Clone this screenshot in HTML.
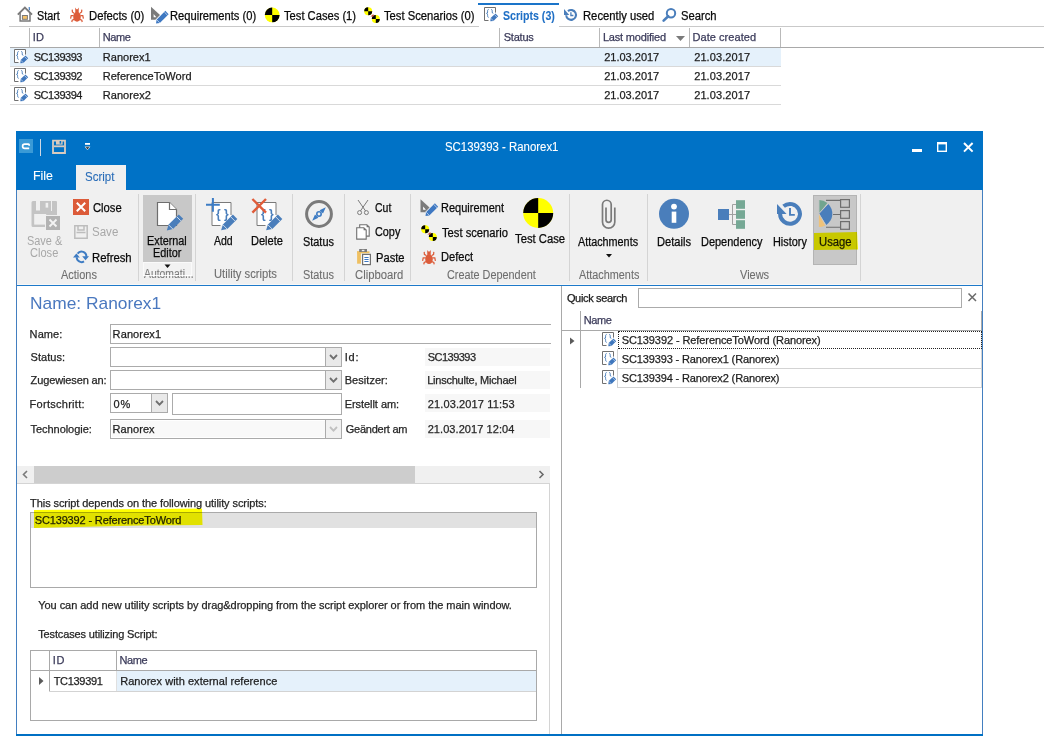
<!DOCTYPE html>
<html><head><meta charset="utf-8"><title>Ranorex Script</title>
<style>
html,body{margin:0;padding:0;}
body{width:1044px;height:736px;position:relative;overflow:hidden;background:#ffffff;font-family:"Liberation Sans",sans-serif;}
.t{position:absolute;white-space:pre;line-height:20px;height:20px;}
.r{position:absolute;}
svg.ov{position:absolute;left:0;top:0;}
</style></head><body>
<div class="t" style="left:36.60px;top:5.64px;font-size:12px;color:#0a0a0a;-webkit-text-stroke:0.25px #0a0a0a;transform:scaleX(0.9);transform-origin:0 0;">Start</div>
<div class="t" style="left:88.56px;top:5.64px;font-size:12px;color:#0a0a0a;-webkit-text-stroke:0.25px #0a0a0a;transform:scaleX(0.9404);transform-origin:0 0;">Defects (0)</div>
<div class="t" style="left:170.47px;top:5.64px;font-size:12px;color:#0a0a0a;-webkit-text-stroke:0.25px #0a0a0a;transform:scaleX(0.9297);transform-origin:0 0;">Requirements (0)</div>
<div class="t" style="left:284.30px;top:5.64px;font-size:12px;color:#0a0a0a;-webkit-text-stroke:0.25px #0a0a0a;transform:scaleX(0.9312);transform-origin:0 0;">Test Cases (1)</div>
<div class="t" style="left:384.30px;top:5.64px;font-size:12px;color:#0a0a0a;-webkit-text-stroke:0.25px #0a0a0a;transform:scaleX(0.9365);transform-origin:0 0;">Test Scenarios (0)</div>
<div class="t" style="left:583.31px;top:5.64px;font-size:12px;color:#0a0a0a;-webkit-text-stroke:0.25px #0a0a0a;transform:scaleX(0.9373);transform-origin:0 0;">Recently used</div>
<div class="t" style="left:681.26px;top:5.64px;font-size:12px;color:#0a0a0a;-webkit-text-stroke:0.25px #0a0a0a;transform:scaleX(0.9351);transform-origin:0 0;">Search</div>
<div class="t" style="left:502.90px;top:5.64px;font-size:12px;color:#1f6fc5;font-weight:bold;-webkit-text-stroke:0.1px #1f6fc5;transform:scaleX(0.8828);transform-origin:0 0;">Scripts (3)</div>
<div class="r" style="left:9px;top:26px;width:470px;height:1px;background:#c9c9c9;"></div>
<div class="r" style="left:559px;top:26px;width:485px;height:1px;background:#c9c9c9;"></div>
<div class="r" style="left:478px;top:3px;width:81px;height:2px;background:#1a74c9;"></div>
<div class="r" style="left:10px;top:47px;width:1034px;height:1px;background:#a9a9a9;"></div>
<div class="r" style="left:29px;top:28px;width:1px;height:19px;background:#b9b9b9;"></div>
<div class="r" style="left:99px;top:28px;width:1px;height:19px;background:#b9b9b9;"></div>
<div class="r" style="left:499px;top:28px;width:1px;height:19px;background:#b9b9b9;"></div>
<div class="r" style="left:599px;top:28px;width:1px;height:19px;background:#b9b9b9;"></div>
<div class="r" style="left:689px;top:28px;width:1px;height:19px;background:#b9b9b9;"></div>
<div class="r" style="left:780px;top:28px;width:1px;height:19px;background:#b9b9b9;"></div>
<div class="t" style="left:32.70px;top:27.19px;font-size:11px;color:#3b3b5a;letter-spacing:0.2px;-webkit-text-stroke:0.25px #3b3b5a;">ID</div>
<div class="t" style="left:102.70px;top:27.19px;font-size:11px;color:#3b3b5a;letter-spacing:-0.4px;-webkit-text-stroke:0.25px #3b3b5a;">Name</div>
<div class="t" style="left:503.70px;top:27.19px;font-size:11px;color:#3b3b5a;letter-spacing:-0.2px;-webkit-text-stroke:0.25px #3b3b5a;">Status</div>
<div class="t" style="left:602.90px;top:27.19px;font-size:11px;color:#3b3b5a;letter-spacing:-0.183px;-webkit-text-stroke:0.25px #3b3b5a;">Last modified</div>
<div class="t" style="left:692.50px;top:27.19px;font-size:11px;color:#3b3b5a;letter-spacing:0.055px;-webkit-text-stroke:0.25px #3b3b5a;">Date created</div>
<div class="r" style="left:10px;top:48px;width:771px;height:18px;background:#e5f1fb;"></div>
<div class="r" style="left:10px;top:66px;width:771px;height:1px;background:#d9d9d9;"></div>
<div class="r" style="left:10px;top:85px;width:771px;height:1px;background:#d9d9d9;"></div>
<div class="r" style="left:10px;top:104px;width:771px;height:1px;background:#d9d9d9;"></div>
<div class="t" style="left:33.70px;top:47.39px;font-size:11px;color:#1e1e1e;letter-spacing:-0.457px;-webkit-text-stroke:0.25px #1e1e1e;">SC139393</div>
<div class="t" style="left:102.85px;top:47.39px;font-size:11px;color:#1e1e1e;-webkit-text-stroke:0.25px #1e1e1e;">Ranorex1</div>
<div class="t" style="left:604.20px;top:47.39px;font-size:11px;color:#1e1e1e;-webkit-text-stroke:0.25px #1e1e1e;">21.03.2017</div>
<div class="t" style="left:694.20px;top:47.39px;font-size:11px;color:#1e1e1e;letter-spacing:0.088px;-webkit-text-stroke:0.25px #1e1e1e;">21.03.2017</div>
<div class="t" style="left:33.70px;top:66.39px;font-size:11px;color:#1e1e1e;letter-spacing:-0.457px;-webkit-text-stroke:0.25px #1e1e1e;">SC139392</div>
<div class="t" style="left:102.70px;top:66.39px;font-size:11px;color:#1e1e1e;letter-spacing:0.028px;-webkit-text-stroke:0.25px #1e1e1e;">ReferenceToWord</div>
<div class="t" style="left:604.20px;top:66.39px;font-size:11px;color:#1e1e1e;-webkit-text-stroke:0.25px #1e1e1e;">21.03.2017</div>
<div class="t" style="left:694.20px;top:66.39px;font-size:11px;color:#1e1e1e;letter-spacing:0.088px;-webkit-text-stroke:0.25px #1e1e1e;">21.03.2017</div>
<div class="t" style="left:33.70px;top:85.39px;font-size:11px;color:#1e1e1e;letter-spacing:-0.457px;-webkit-text-stroke:0.25px #1e1e1e;">SC139394</div>
<div class="t" style="left:102.70px;top:85.39px;font-size:11px;color:#1e1e1e;letter-spacing:0.085px;-webkit-text-stroke:0.25px #1e1e1e;">Ranorex2</div>
<div class="t" style="left:604.20px;top:85.39px;font-size:11px;color:#1e1e1e;-webkit-text-stroke:0.25px #1e1e1e;">21.03.2017</div>
<div class="t" style="left:694.20px;top:85.39px;font-size:11px;color:#1e1e1e;letter-spacing:0.088px;-webkit-text-stroke:0.25px #1e1e1e;">21.03.2017</div>
<div class="r" style="left:16px;top:131px;width:967px;height:605px;background:#ffffff;box-sizing:border-box;border:1px solid #437fc0;"></div>
<div class="r" style="left:16px;top:131px;width:967px;height:59px;background:#0072c6;"></div>
<div class="r" style="left:17px;top:190px;width:965px;height:94px;background:#f0f0f0;"></div>
<div class="r" style="left:17px;top:284px;width:965px;height:1px;background:#f8f8f8;"></div>
<div class="r" style="left:17px;top:285px;width:965px;height:1px;background:#1d79c9;"></div>
<div class="r" style="left:16px;top:734px;width:967px;height:2px;background:#0070c4;"></div>
<div class="r" style="left:19px;top:139px;width:14px;height:14px;background:#3a9ad6;"></div>
<div class="r" style="left:40px;top:139px;width:1px;height:17px;background:#cfd8e4;"></div>
<div class="t" style="left:445.40px;top:137.14px;font-size:12px;color:#ffffff;-webkit-text-stroke:0.1px #ffffff;transform:scaleX(0.95);transform-origin:0 0;">SC139393 - Ranorex1</div>
<div class="r" style="left:912px;top:149px;width:10px;height:3px;background:#ffffff;"></div>
<div class="t" style="left:33.37px;top:165.64px;font-size:12px;color:#ffffff;-webkit-text-stroke:0.1px #ffffff;transform:scaleX(1.0333);transform-origin:0 0;">File</div>
<div class="r" style="left:76px;top:165px;width:50px;height:25px;background:#f0f0f0;"></div>
<div class="t" style="left:85.34px;top:166.64px;font-size:12px;color:#2a6db8;-webkit-text-stroke:0.1px #2a6db8;transform:scaleX(0.9567);transform-origin:0 0;">Script</div>
<div class="r" style="left:138px;top:194px;width:1px;height:87px;background:#d4d4d4;"></div>
<div class="r" style="left:195px;top:194px;width:1px;height:87px;background:#d4d4d4;"></div>
<div class="r" style="left:292px;top:194px;width:1px;height:87px;background:#d4d4d4;"></div>
<div class="r" style="left:344px;top:194px;width:1px;height:87px;background:#d4d4d4;"></div>
<div class="r" style="left:410px;top:194px;width:1px;height:87px;background:#d4d4d4;"></div>
<div class="r" style="left:569px;top:194px;width:1px;height:87px;background:#d4d4d4;"></div>
<div class="r" style="left:647px;top:194px;width:1px;height:87px;background:#d4d4d4;"></div>
<div class="r" style="left:860px;top:194px;width:1px;height:87px;background:#d4d4d4;"></div>
<div class="t" style="left:27.19px;top:230.54px;font-size:12px;color:#a8a8a8;transform:scaleX(0.9105);transform-origin:0 0;">Save &amp;</div>
<div class="t" style="left:30.30px;top:243.44px;font-size:12px;color:#a8a8a8;transform:scaleX(0.9233);transform-origin:0 0;">Close</div>
<div class="r" style="left:73px;top:199px;width:16px;height:16px;background:#dc5b39;"></div>
<div class="t" style="left:93.00px;top:197.74px;font-size:12px;color:#0a0a0a;-webkit-text-stroke:0.25px #0a0a0a;transform:scaleX(0.9355);transform-origin:0 0;">Close</div>
<div class="t" style="left:92.04px;top:222.24px;font-size:12px;color:#a8a8a8;transform:scaleX(0.9615);transform-origin:0 0;">Save</div>
<div class="t" style="left:92.06px;top:247.94px;font-size:12px;color:#0a0a0a;-webkit-text-stroke:0.25px #0a0a0a;transform:scaleX(0.9439);transform-origin:0 0;">Refresh</div>
<div class="t" style="left:61.40px;top:265.14px;font-size:12px;color:#6e6e6e;-webkit-text-stroke:0.1px #6e6e6e;transform:scaleX(0.9128);transform-origin:0 0;">Actions</div>
<div class="r" style="left:143px;top:195px;width:49px;height:67px;background:#c8c8c8;"></div>
<div class="r" style="left:143px;top:262px;width:49px;height:14px;background:#f2f2f2;box-sizing:border-box;border:1px solid #fafafa;"></div>
<div class="t" style="left:146.60px;top:230.64px;font-size:12px;color:#0a0a0a;-webkit-text-stroke:0.25px #0a0a0a;transform:scaleX(0.9023);transform-origin:0 0;">External</div>
<div class="t" style="left:152.69px;top:243.14px;font-size:12px;color:#0a0a0a;-webkit-text-stroke:0.25px #0a0a0a;transform:scaleX(0.9065);transform-origin:0 0;">Editor</div>
<div class="t" style="left:143.50px;top:264.14px;font-size:12px;color:#7c7c7c;-webkit-text-stroke:0.1px #7c7c7c;transform:scaleX(0.8649);transform-origin:0 0;">Automati...</div>
<div class="t" style="left:214.00px;top:230.64px;font-size:12px;color:#0a0a0a;-webkit-text-stroke:0.25px #0a0a0a;transform:scaleX(0.8762);transform-origin:0 0;">Add</div>
<div class="t" style="left:250.78px;top:230.64px;font-size:12px;color:#0a0a0a;-webkit-text-stroke:0.25px #0a0a0a;transform:scaleX(0.9206);transform-origin:0 0;">Delete</div>
<div class="t" style="left:213.57px;top:264.24px;font-size:12px;color:#6e6e6e;-webkit-text-stroke:0.1px #6e6e6e;transform:scaleX(0.9348);transform-origin:0 0;">Utility scripts</div>
<div class="t" style="left:302.59px;top:232.04px;font-size:12px;color:#0a0a0a;-webkit-text-stroke:0.25px #0a0a0a;transform:scaleX(0.9091);transform-origin:0 0;">Status</div>
<div class="t" style="left:303.39px;top:264.54px;font-size:12px;color:#6e6e6e;-webkit-text-stroke:0.1px #6e6e6e;transform:scaleX(0.9091);transform-origin:0 0;">Status</div>
<div class="t" style="left:375.40px;top:197.74px;font-size:12px;color:#0a0a0a;-webkit-text-stroke:0.25px #0a0a0a;transform:scaleX(0.8737);transform-origin:0 0;">Cut</div>
<div class="t" style="left:375.40px;top:222.24px;font-size:12px;color:#0a0a0a;-webkit-text-stroke:0.25px #0a0a0a;transform:scaleX(0.9036);transform-origin:0 0;">Copy</div>
<div class="t" style="left:376.07px;top:247.84px;font-size:12px;color:#0a0a0a;-webkit-text-stroke:0.25px #0a0a0a;transform:scaleX(0.93);transform-origin:0 0;">Paste</div>
<div class="t" style="left:355.00px;top:264.54px;font-size:12px;color:#6e6e6e;-webkit-text-stroke:0.1px #6e6e6e;transform:scaleX(0.9392);transform-origin:0 0;">Clipboard</div>
<div class="t" style="left:440.88px;top:197.74px;font-size:12px;color:#0a0a0a;-webkit-text-stroke:0.25px #0a0a0a;transform:scaleX(0.9162);transform-origin:0 0;">Requirement</div>
<div class="t" style="left:441.80px;top:222.64px;font-size:12px;color:#0a0a0a;-webkit-text-stroke:0.25px #0a0a0a;transform:scaleX(0.9324);transform-origin:0 0;">Test scenario</div>
<div class="t" style="left:441.38px;top:247.34px;font-size:12px;color:#0a0a0a;-webkit-text-stroke:0.25px #0a0a0a;transform:scaleX(0.9235);transform-origin:0 0;">Defect</div>
<div class="t" style="left:515.00px;top:229.14px;font-size:12px;color:#0a0a0a;-webkit-text-stroke:0.25px #0a0a0a;transform:scaleX(0.9377);transform-origin:0 0;">Test Case</div>
<div class="t" style="left:446.85px;top:265.14px;font-size:12px;color:#6e6e6e;-webkit-text-stroke:0.1px #6e6e6e;transform:scaleX(0.9051);transform-origin:0 0;">Create Dependent</div>
<div class="t" style="left:578.00px;top:232.04px;font-size:12px;color:#0a0a0a;-webkit-text-stroke:0.25px #0a0a0a;transform:scaleX(0.9);transform-origin:0 0;">Attachments</div>
<div class="t" style="left:578.80px;top:264.54px;font-size:12px;color:#6e6e6e;-webkit-text-stroke:0.1px #6e6e6e;transform:scaleX(0.9045);transform-origin:0 0;">Attachments</div>
<div class="t" style="left:656.97px;top:232.04px;font-size:12px;color:#0a0a0a;-webkit-text-stroke:0.25px #0a0a0a;transform:scaleX(0.9278);transform-origin:0 0;">Details</div>
<div class="t" style="left:701.09px;top:232.04px;font-size:12px;color:#0a0a0a;-webkit-text-stroke:0.25px #0a0a0a;transform:scaleX(0.9134);transform-origin:0 0;">Dependency</div>
<div class="t" style="left:773.49px;top:232.04px;font-size:12px;color:#0a0a0a;-webkit-text-stroke:0.25px #0a0a0a;transform:scaleX(0.9081);transform-origin:0 0;">History</div>
<div class="r" style="left:813px;top:195px;width:44px;height:70px;background:#c8c8c8;box-sizing:border-box;border:1px solid #b4b4b4;"></div>
<div class="t" style="left:819.11px;top:231.84px;font-size:12px;color:#1a1a1a;-webkit-text-stroke:0.25px #1a1a1a;transform:scaleX(0.9382);transform-origin:0 0;">Usage</div>
<div class="t" style="left:740.00px;top:264.54px;font-size:12px;color:#6e6e6e;-webkit-text-stroke:0.1px #6e6e6e;transform:scaleX(0.9156);transform-origin:0 0;">Views</div>
<div class="r" style="left:561px;top:286px;width:1px;height:448px;background:#a9a9a9;"></div>
<div class="t" style="left:30.00px;top:293.85px;font-size:16.6px;color:#4a78bf;transform:scaleX(1.046);transform-origin:0 0;">Name: Ranorex1</div>
<div class="t" style="left:29.60px;top:324.29px;font-size:11px;color:#262626;letter-spacing:0.1px;-webkit-text-stroke:0.25px #262626;">Name:</div>
<div class="t" style="left:30.60px;top:347.09px;font-size:11px;color:#262626;letter-spacing:0.034px;-webkit-text-stroke:0.25px #262626;">Status:</div>
<div class="t" style="left:30.60px;top:369.79px;font-size:11px;color:#262626;letter-spacing:-0.123px;-webkit-text-stroke:0.25px #262626;">Zugewiesen an:</div>
<div class="t" style="left:29.60px;top:393.59px;font-size:11px;color:#262626;letter-spacing:0.273px;-webkit-text-stroke:0.25px #262626;">Fortschritt:</div>
<div class="t" style="left:30.60px;top:419.09px;font-size:11px;color:#262626;letter-spacing:-0.055px;-webkit-text-stroke:0.25px #262626;">Technologie:</div>
<div class="r" style="left:110px;top:324px;width:441px;height:1px;background:#ababab;"></div>
<div class="r" style="left:110px;top:343px;width:441px;height:1px;background:#ababab;"></div>
<div class="r" style="left:110px;top:324px;width:1px;height:20px;background:#ababab;"></div>
<div class="t" style="left:112.60px;top:324.29px;font-size:11px;color:#1e1e1e;letter-spacing:0.115px;-webkit-text-stroke:0.25px #1e1e1e;">Ranorex1</div>
<div class="r" style="left:110px;top:347px;width:232px;height:20px;background:#ffffff;box-sizing:border-box;border:1px solid #ababab;"></div>
<div class="r" style="left:325px;top:348px;width:16px;height:18px;background:#e9e9e9;"></div>
<div class="r" style="left:325px;top:347px;width:1px;height:20px;background:#ababab;"></div>
<div class="r" style="left:110px;top:370px;width:232px;height:20px;background:#ffffff;box-sizing:border-box;border:1px solid #ababab;"></div>
<div class="r" style="left:325px;top:371px;width:16px;height:18px;background:#e9e9e9;"></div>
<div class="r" style="left:325px;top:370px;width:1px;height:20px;background:#ababab;"></div>
<div class="r" style="left:110px;top:393px;width:58px;height:20px;background:#ffffff;box-sizing:border-box;border:1px solid #ababab;"></div>
<div class="r" style="left:151px;top:394px;width:16px;height:18px;background:#e9e9e9;"></div>
<div class="r" style="left:151px;top:393px;width:1px;height:20px;background:#ababab;"></div>
<div class="t" style="left:113.60px;top:393.59px;font-size:11px;color:#1e1e1e;letter-spacing:0.8px;-webkit-text-stroke:0.25px #1e1e1e;">0%</div>
<div class="r" style="left:172px;top:393px;width:170px;height:22px;background:#fff;box-sizing:border-box;border:1px solid #ababab;"></div>
<div class="r" style="left:110px;top:419px;width:232px;height:20px;background:#ffffff;box-sizing:border-box;border:1px solid #ababab;"></div>
<div class="r" style="left:112px;top:421px;width:228px;height:16px;background:#f9f9f9;"></div>
<div class="r" style="left:325px;top:420px;width:16px;height:18px;background:#f1f1f1;"></div>
<div class="r" style="left:325px;top:419px;width:1px;height:20px;background:#ababab;"></div>
<div class="t" style="left:112.60px;top:419.09px;font-size:11px;color:#1e1e1e;letter-spacing:0.067px;-webkit-text-stroke:0.25px #1e1e1e;">Ranorex</div>
<div class="t" style="left:344.70px;top:346.89px;font-size:11px;color:#262626;letter-spacing:0.8px;-webkit-text-stroke:0.25px #262626;">Id:</div>
<div class="t" style="left:344.70px;top:369.89px;font-size:11px;color:#262626;letter-spacing:0.05px;-webkit-text-stroke:0.25px #262626;">Besitzer:</div>
<div class="t" style="left:344.70px;top:393.99px;font-size:11px;color:#262626;letter-spacing:-0.054px;-webkit-text-stroke:0.25px #262626;">Erstellt am:</div>
<div class="t" style="left:345.70px;top:418.89px;font-size:11px;color:#262626;letter-spacing:-0.24px;-webkit-text-stroke:0.25px #262626;">Geändert am</div>
<div class="r" style="left:425px;top:348px;width:125px;height:18px;background:#f7f7f7;"></div>
<div class="r" style="left:425px;top:371px;width:125px;height:18px;background:#f7f7f7;"></div>
<div class="r" style="left:425px;top:394px;width:125px;height:18px;background:#f7f7f7;"></div>
<div class="r" style="left:425px;top:420px;width:125px;height:18px;background:#f7f7f7;"></div>
<div class="t" style="left:427.70px;top:346.89px;font-size:11px;color:#262626;letter-spacing:-0.514px;-webkit-text-stroke:0.25px #262626;">SC139393</div>
<div class="t" style="left:427.15px;top:369.89px;font-size:11px;color:#262626;letter-spacing:-0.222px;-webkit-text-stroke:0.25px #262626;">Linschulte, Michael</div>
<div class="t" style="left:427.70px;top:393.99px;font-size:11px;color:#262626;letter-spacing:0.133px;-webkit-text-stroke:0.25px #262626;">21.03.2017 11:53</div>
<div class="t" style="left:427.70px;top:418.89px;font-size:11px;color:#262626;letter-spacing:0.067px;-webkit-text-stroke:0.25px #262626;">21.03.2017 12:04</div>
<div class="r" style="left:17px;top:466px;width:533px;height:17px;background:#f0f0f0;"></div>
<div class="r" style="left:34px;top:466px;width:381px;height:17px;background:#cdcdcd;"></div>
<div class="r" style="left:17px;top:483px;width:533px;height:1px;background:#d4d4d4;"></div>
<div class="r" style="left:549px;top:483px;width:1px;height:251px;background:#d4d4d4;"></div>
<div class="t" style="left:30.10px;top:492.89px;font-size:11px;color:#262626;letter-spacing:-0.081px;-webkit-text-stroke:0.25px #262626;">This script depends on the following utility scripts:</div>
<div class="r" style="left:30px;top:512px;width:507px;height:76px;background:#ffffff;box-sizing:border-box;border:1px solid #a9a9a9;"></div>
<div class="r" style="left:31px;top:513px;width:505px;height:15px;background:#e1e1e1;"></div>
<div class="t" style="left:34.70px;top:510.49px;font-size:11px;color:#1e1e1e;letter-spacing:-0.144px;-webkit-text-stroke:0.25px #1e1e1e;">SC139392 - ReferenceToWord</div>
<div class="t" style="left:38.20px;top:594.99px;font-size:11px;color:#262626;letter-spacing:-0.041px;-webkit-text-stroke:0.25px #262626;">You can add new utility scripts by drag&amp;dropping from the script explorer or from the main window.</div>
<div class="t" style="left:38.20px;top:623.79px;font-size:11px;color:#262626;letter-spacing:-0.139px;-webkit-text-stroke:0.25px #262626;">Testcases utilizing Script:</div>
<div class="r" style="left:30px;top:650px;width:507px;height:71px;background:#ffffff;box-sizing:border-box;border:1px solid #a9a9a9;"></div>
<div class="r" style="left:31px;top:670px;width:505px;height:1px;background:#a9a9a9;"></div>
<div class="r" style="left:49px;top:651px;width:1px;height:41px;background:#a9a9a9;"></div>
<div class="r" style="left:116px;top:651px;width:1px;height:20px;background:#a9a9a9;"></div>
<div class="r" style="left:117px;top:671px;width:419px;height:20px;background:#e5f1fb;"></div>
<div class="r" style="left:49px;top:691px;width:487px;height:1px;background:#d3d3d3;"></div>
<div class="r" style="left:116px;top:671px;width:1px;height:20px;background:#e0e0e0;"></div>
<div class="t" style="left:52.70px;top:649.79px;font-size:11px;color:#3b3b5a;letter-spacing:0.8px;-webkit-text-stroke:0.25px #3b3b5a;">ID</div>
<div class="t" style="left:119.50px;top:649.79px;font-size:11px;color:#3b3b5a;letter-spacing:-0.4px;-webkit-text-stroke:0.25px #3b3b5a;">Name</div>
<div class="t" style="left:53.70px;top:670.99px;font-size:11px;color:#1e1e1e;letter-spacing:-0.314px;-webkit-text-stroke:0.25px #1e1e1e;">TC139391</div>
<div class="t" style="left:120.20px;top:670.99px;font-size:11px;color:#1e1e1e;letter-spacing:0.04px;-webkit-text-stroke:0.25px #1e1e1e;">Ranorex with external reference</div>
<div class="t" style="left:566.90px;top:287.79px;font-size:11px;color:#1a1a1a;letter-spacing:-0.327px;-webkit-text-stroke:0.25px #1a1a1a;">Quick search</div>
<div class="r" style="left:638px;top:288px;width:324px;height:20px;background:#fff;box-sizing:border-box;border:1px solid #ababab;"></div>
<div class="r" style="left:580px;top:311px;width:1px;height:77px;background:#a9a9a9;"></div>
<div class="r" style="left:562px;top:330px;width:420px;height:1px;background:#a9a9a9;"></div>
<div class="r" style="left:981px;top:311px;width:1px;height:20px;background:#a9a9a9;"></div>
<div class="t" style="left:583.70px;top:309.99px;font-size:11px;color:#3b3b5a;letter-spacing:-0.4px;-webkit-text-stroke:0.25px #3b3b5a;">Name</div>
<div class="r" style="left:617px;top:368px;width:365px;height:1px;background:#d3d3d3;"></div>
<div class="r" style="left:617px;top:387px;width:365px;height:1px;background:#d3d3d3;"></div>
<div class="r" style="left:617px;top:349px;width:1px;height:39px;background:#d3d3d3;"></div>
<div class="r" style="left:981px;top:331px;width:1px;height:57px;background:#d3d3d3;"></div>
<div class="t" style="left:621.70px;top:330.19px;font-size:11px;color:#1e1e1e;letter-spacing:-0.092px;-webkit-text-stroke:0.25px #1e1e1e;">SC139392 - ReferenceToWord (Ranorex)</div>
<div class="t" style="left:621.70px;top:349.14px;font-size:11px;color:#1e1e1e;letter-spacing:-0.129px;-webkit-text-stroke:0.25px #1e1e1e;">SC139393 - Ranorex1 (Ranorex)</div>
<div class="t" style="left:621.70px;top:368.09px;font-size:11px;color:#1e1e1e;letter-spacing:-0.129px;-webkit-text-stroke:0.25px #1e1e1e;">SC139394 - Ranorex2 (Ranorex)</div>
<div class="r" style="left:618px;top:331px;width:364px;height:18px;box-sizing:border-box;border:1px dotted #222;"></div>
<svg class="ov" width="1044" height="736" viewBox="0 0 1044 736">
<path d="M676 36 L685 36 L680.5 41 Z" fill="#7a7a7a"/>
<g transform="translate(13,48)"><rect x="1.5" y="1.5" width="11" height="13" fill="#ffffff"/><path d="M5.5 14.5 H1.5 V1.5 H12.5 V6.6" fill="none" stroke="#707070" stroke-width="1"/><path d="M5.6 3.4 C4.4 3.6 4.6 4.8 4.6 6 C4.6 6.9 4.3 7.3 3.5 7.4 C4.3 7.5 4.6 7.9 4.6 8.8 C4.6 10 4.4 11.2 5.6 11.4" fill="none" stroke="#4a7ebb" stroke-width="0.95"/><path d="M8.2 3.4 C9.4 3.6 9.2 4.8 9.2 6 C9.2 6.9 9.5 7.3 10.3 7.4" fill="none" stroke="#4a7ebb" stroke-width="0.95"/><path d="M7.3 15.3 L7.66 12.12 L12.39 7.39 L15.21 10.21 L10.48 14.94 Z" fill="#3f77bd"/><path d="M7.66 12.12 L10.48 14.94 M11.33 8.45 L14.15 11.27" stroke="#ffffff" stroke-width="0.55"/></g>
<g transform="translate(13,67)"><rect x="1.5" y="1.5" width="11" height="13" fill="#ffffff"/><path d="M5.5 14.5 H1.5 V1.5 H12.5 V6.6" fill="none" stroke="#707070" stroke-width="1"/><path d="M5.6 3.4 C4.4 3.6 4.6 4.8 4.6 6 C4.6 6.9 4.3 7.3 3.5 7.4 C4.3 7.5 4.6 7.9 4.6 8.8 C4.6 10 4.4 11.2 5.6 11.4" fill="none" stroke="#4a7ebb" stroke-width="0.95"/><path d="M8.2 3.4 C9.4 3.6 9.2 4.8 9.2 6 C9.2 6.9 9.5 7.3 10.3 7.4" fill="none" stroke="#4a7ebb" stroke-width="0.95"/><path d="M7.3 15.3 L7.66 12.12 L12.39 7.39 L15.21 10.21 L10.48 14.94 Z" fill="#3f77bd"/><path d="M7.66 12.12 L10.48 14.94 M11.33 8.45 L14.15 11.27" stroke="#ffffff" stroke-width="0.55"/></g>
<g transform="translate(13,86)"><rect x="1.5" y="1.5" width="11" height="13" fill="#ffffff"/><path d="M5.5 14.5 H1.5 V1.5 H12.5 V6.6" fill="none" stroke="#707070" stroke-width="1"/><path d="M5.6 3.4 C4.4 3.6 4.6 4.8 4.6 6 C4.6 6.9 4.3 7.3 3.5 7.4 C4.3 7.5 4.6 7.9 4.6 8.8 C4.6 10 4.4 11.2 5.6 11.4" fill="none" stroke="#4a7ebb" stroke-width="0.95"/><path d="M8.2 3.4 C9.4 3.6 9.2 4.8 9.2 6 C9.2 6.9 9.5 7.3 10.3 7.4" fill="none" stroke="#4a7ebb" stroke-width="0.95"/><path d="M7.3 15.3 L7.66 12.12 L12.39 7.39 L15.21 10.21 L10.48 14.94 Z" fill="#3f77bd"/><path d="M7.66 12.12 L10.48 14.94 M11.33 8.45 L14.15 11.27" stroke="#ffffff" stroke-width="0.55"/></g>
<path d="M17.8 14.6 L24.9 7.6 L32 14.6" fill="none" stroke="#7b7b7b" stroke-width="1.9" stroke-linejoin="miter"/><path d="M20.1 12.4 V21 H30 V12.4" fill="none" stroke="#7b7b7b" stroke-width="1.5"/><rect x="22.4" y="15.5" width="5" height="3.8" fill="#f6c36b" stroke="#7b7b7b" stroke-width="1"/><path d="M29.2 7 L29.4 10.2" stroke="#3b78c0" stroke-width="1.1"/>
<g transform="translate(70,7) scale(1.0)" fill="#dc5c3a" stroke="#dc5c3a"><ellipse cx="7" cy="9.8" rx="3.8" ry="5.0" stroke="none"/><path d="M5.3 5.2 L5.2 0.6 L6.4 2.2 L7.6 2.2 L8.8 0.6 L8.7 5.2 Z" stroke="none"/><path d="M4 6.2 L2.4 5 L2.2 2.6 M10 6.2 L11.6 5 L11.8 2.6 M3.6 8.6 L1.2 8.6 L0.6 11.6 M10.4 8.6 L12.8 8.6 L13.4 11.6 M4.2 12.4 L2.2 13.2 L1.8 15 M9.8 12.4 L11.8 13.2 L12.2 15" fill="none" stroke-width="1.25"/></g>
<g transform="translate(151,6) scale(1.0)"><path d="M0 0.8 L0 13.8 L4.4 13.8 L9 9 Z" fill="#7b7b7b"/><path d="M2.6 8 L2.6 11.2 L5.4 11.2 Z" fill="#ffffff"/><path d="M5 17.5 L5.57 13.67 L14.37 4.87 L17.63 8.13 L8.83 16.93 Z" fill="#3e78c2"/><path d="M5.57 13.67 L8.83 16.93 M13.3 6 L16.5 9.2" stroke="#fff" stroke-width="0.6"/></g>
<circle cx="272.2" cy="14.9" r="7.4" fill="#ffff00"/><path d="M272.2 14.9 L264.8 14.9 A7.4 7.4 0 0 1 272.2 7.5 Z" fill="#000"/><path d="M272.2 14.9 L279.59999999999997 14.9 A7.4 7.4 0 0 1 272.2 22.3 Z" fill="#000"/>
<g transform="translate(364,6) scale(1.0)">
<circle cx="4.2" cy="5.3" r="4.0" fill="#ffff00"/><path d="M4.2 5.3 L0.20000000000000018 5.3 A4.0 4.0 0 0 1 4.2 1.2999999999999998 Z" fill="#000"/><path d="M4.2 5.3 L8.2 5.3 A4.0 4.0 0 0 1 4.2 9.3 Z" fill="#000"/>
<circle cx="11.8" cy="12.9" r="4.0" fill="#ffff00"/><path d="M11.8 12.9 L7.800000000000001 12.9 A4.0 4.0 0 0 1 11.8 8.9 Z" fill="#000"/><path d="M11.8 12.9 L15.8 12.9 A4.0 4.0 0 0 1 11.8 16.9 Z" fill="#000"/>
<path d="M6.4 10.5 L9.4 8 L9.6 10.6 Z" fill="#d2452c"/>
</g>
<g transform="translate(483,6)"><rect x="1.5" y="1.5" width="11" height="13" fill="#ffffff"/><path d="M5.5 14.5 H1.5 V1.5 H12.5 V6.6" fill="none" stroke="#707070" stroke-width="1"/><path d="M5.6 3.4 C4.4 3.6 4.6 4.8 4.6 6 C4.6 6.9 4.3 7.3 3.5 7.4 C4.3 7.5 4.6 7.9 4.6 8.8 C4.6 10 4.4 11.2 5.6 11.4" fill="none" stroke="#4a7ebb" stroke-width="0.95"/><path d="M8.2 3.4 C9.4 3.6 9.2 4.8 9.2 6 C9.2 6.9 9.5 7.3 10.3 7.4" fill="none" stroke="#4a7ebb" stroke-width="0.95"/><path d="M7.3 15.3 L7.66 12.12 L12.39 7.39 L15.21 10.21 L10.48 14.94 Z" fill="#3f77bd"/><path d="M7.66 12.12 L10.48 14.94 M11.33 8.45 L14.15 11.27" stroke="#ffffff" stroke-width="0.55"/></g>
<path d="M566.2 15.2 A4.9 4.9 0 1 0 567.95 11.15" fill="none" stroke="#4a7ebb" stroke-width="2.1"/><path d="M564 9.1 L564 14.9 L569.3 14.9 Z" fill="#4a7ebb"/><path d="M570.9 12.2 V15.5 H573.4" fill="none" stroke="#4a7ebb" stroke-width="1.3"/>
<g transform="translate(662,8)"><circle cx="9" cy="5.2" r="4.2" fill="none" stroke="#4a7ebb" stroke-width="2"/><path d="M6.2 8.2 L1.6 12.6" stroke="#4a7ebb" stroke-width="2.6" stroke-linecap="round"/></g>
<path d="M29.2 145.8 L29.2 145 Q29 144.2 28.2 144.2 L24.8 144.2 Q22.6 144.2 22.6 146.2 Q22.6 148.3 24.8 148.3 L29.2 148.3" fill="none" stroke="#ffffff" stroke-width="1.7"/>
<path d="M53 140.6 H65 V153 H53 Z" fill="none" stroke="#d9cbbf" stroke-width="1.8"/><rect x="56" y="140" width="6.6" height="4.6" fill="#d9cbbf"/><rect x="59.6" y="141" width="1.6" height="2.6" fill="#0072c6"/><rect x="54" y="145.4" width="10" height="1.8" fill="#d9cbbf"/>
<rect x="85" y="143" width="5" height="1.8" fill="#ffffff"/><path d="M85 146.8 L90 146.8 L87.5 149.8 Z" fill="#333" stroke="#fff" stroke-width="0.6"/>
<rect x="937.7" y="142.7" width="8.6" height="8.6" fill="none" stroke="#fff" stroke-width="1.4"/><rect x="937" y="142" width="10" height="2.4" fill="#fff"/>
<path d="M964 143 L972.6 151.6 M972.6 143 L964 151.6" stroke="#fff" stroke-width="2"/>
<g><path d="M33 201 H56 Q57 201 57 202 V216 H46 V227 H33 Q31.5 227 31.5 225.5 V202.5 Q31.5 201 33 201 Z" fill="#c4c4c4"/><rect x="36" y="201" width="4" height="9.5" fill="#f0f0f0"/><rect x="40" y="201" width="11" height="9" fill="#c4c4c4"/><rect x="51" y="201" width="1" height="10" fill="#f0f0f0"/><rect x="45.6" y="202.8" width="2.6" height="4.8" fill="#f0f0f0"/><rect x="34.2" y="214" width="12" height="10.6" fill="#f0f0f0"/><rect x="45" y="215" width="16" height="16" fill="#f0f0f0"/><rect x="46" y="216" width="14" height="14" fill="#b3b3b3"/><path d="M49.5 219.5 L56.5 226.5 M56.5 219.5 L49.5 226.5" stroke="#f4f4f4" stroke-width="1.8"/></g>
<path d="M76.8 202.8 L85.2 211.2 M85.2 202.8 L76.8 211.2" stroke="#fff" stroke-width="2"/>
<g fill="none" stroke="#bdbdbd" stroke-width="1.5"><path d="M74.8 225.8 H87.2 V238.2 H74.8 Z"/><path d="M78 225.8 V230 H84 V225.8"/><path d="M76.5 232.5 H85.5"/></g>
<g fill="none" stroke="#3e7cc3" stroke-width="2"><path d="M77.6 253.6 A4.8 4.8 0 0 1 86.3 256.8"/><path d="M76.7 257.3 A4.8 4.8 0 0 0 84 261.4"/></g><path d="M82.2 256.3 L89 256.3 L85.5 260.3 Z" fill="#3e7cc3"/><path d="M73 257.4 L79.8 257.4 L76.4 253.4 Z" fill="#3e7cc3"/>
<path d="M157.5 202.5 H169.5 L176.5 209.5 V225.5 H157.5 Z" fill="#ffffff" stroke="#6e6e6e" stroke-width="1.2"/><path d="M169.5 202.5 V209.5 H176.5" fill="#fff" stroke="#6e6e6e" stroke-width="1.2"/><path d="M166.8 230.4 L168.6 224.6 L178.8 214.4 L183.2 218.8 L173 229 Z" fill="#4a7ebb"/><path d="M168.6 224.8 L172.8 229 M176.6 216.6 L180.8 220.8" stroke="#fff" stroke-width="0.7"/>
<path d="M164.5 264.5 L170.5 264.5 L167.5 268 Z" fill="#111"/>
<g transform="translate(211.5,202)"><rect x="0.5" y="0.5" width="19" height="23" fill="#ffffff"/><path d="M0.5 23.5 V0.5 H19.5 V13" fill="none" stroke="#7a7a7a" stroke-width="1"/><path d="M0.5 23.5 H9" fill="none" stroke="#7a7a7a" stroke-width="1"/><text x="4.6" y="16" font-family="Liberation Sans" font-size="12" font-weight="bold" fill="#4a7ebb">{ }</text><path d="M9.6 28.2 L11.4 22.6 L21.4 12.6 L25.8 17 L15.8 27 Z" fill="#4a7ebb"/><path d="M11.4 22.8 L15.6 27 M19.2 14.8 L23.4 19" stroke="#fff" stroke-width="0.7"/></g>
<path d="M206 204.8 H219.8 M212.9 198 V211.7" stroke="#3d7cc4" stroke-width="2"/>
<g transform="translate(256.5,202)"><rect x="0.5" y="0.5" width="19" height="23" fill="#ffffff"/><path d="M0.5 23.5 V0.5 H19.5 V13" fill="none" stroke="#7a7a7a" stroke-width="1"/><path d="M0.5 23.5 H9" fill="none" stroke="#7a7a7a" stroke-width="1"/><text x="4.6" y="16" font-family="Liberation Sans" font-size="12" font-weight="bold" fill="#4a7ebb">{ }</text><path d="M9.6 28.2 L11.4 22.6 L21.4 12.6 L25.8 17 L15.8 27 Z" fill="#4a7ebb"/><path d="M11.4 22.8 L15.6 27 M19.2 14.8 L23.4 19" stroke="#fff" stroke-width="0.7"/></g>
<path d="M252.4 199 L266 212.6 M266 199 L252.4 212.6" stroke="#e05c3a" stroke-width="2.4"/>
<circle cx="319" cy="214" r="12.4" fill="none" stroke="#7a7a7a" stroke-width="3"/><path d="M312.2 220.8 L315 214.4 L318.4 217.8 Z M325.8 207.2 L323 213.6 L319.6 210.2 Z" fill="#3e7cc3"/><circle cx="319" cy="214" r="2.2" fill="none" stroke="#3e7cc3" stroke-width="1.6"/>
<g fill="none" stroke="#7a7a7a" stroke-width="1"><path d="M358 200 L365.6 211 M368 200 L360.4 211"/><circle cx="359.6" cy="212.6" r="2"/><circle cx="366.4" cy="212.6" r="2"/></g>
<g fill="#fff" stroke="#707070" stroke-width="1.1"><path d="M359.7 224.7 H366.8 L369.2 227.1 V236.1 H359.7 Z"/><path d="M356.7 227.7 H363.8 L366.2 230.1 V239.1 H356.7 Z"/></g><path d="M366.6 224.7 L369.2 227.3 L366.6 227.3 Z M363.6 227.7 L366.2 230.3 L363.6 230.3 Z" fill="#707070"/>
<rect x="357.1" y="251.3" width="3.8" height="12.4" fill="#efc062"/><rect x="357.1" y="251.3" width="12.4" height="2" fill="#efc062"/><rect x="359.2" y="249" width="7.8" height="3" fill="#7a7a7a"/><rect x="361.8" y="249.8" width="2.6" height="1.4" fill="#f0f0f0"/><rect x="362.6" y="254.4" width="7.8" height="10.2" fill="#fff" stroke="#707070" stroke-width="1.2"/><path d="M364.4 257.5 H368.6 M364.4 259.5 H368.6 M364.4 261.5 H368.6" stroke="#3e78c2" stroke-width="1"/>
<g transform="translate(420.5,198.5) scale(1.0)"><path d="M0 0.8 L0 13.8 L4.4 13.8 L9 9 Z" fill="#7b7b7b"/><path d="M2.6 8 L2.6 11.2 L5.4 11.2 Z" fill="#ffffff"/><path d="M5 17.5 L5.57 13.67 L14.37 4.87 L17.63 8.13 L8.83 16.93 Z" fill="#3e78c2"/><path d="M5.57 13.67 L8.83 16.93 M13.3 6 L16.5 9.2" stroke="#fff" stroke-width="0.6"/></g>
<g transform="translate(421,224) scale(1.0)">
<circle cx="4.2" cy="5.3" r="4.0" fill="#ffff00"/><path d="M4.2 5.3 L0.20000000000000018 5.3 A4.0 4.0 0 0 1 4.2 1.2999999999999998 Z" fill="#000"/><path d="M4.2 5.3 L8.2 5.3 A4.0 4.0 0 0 1 4.2 9.3 Z" fill="#000"/>
<circle cx="11.8" cy="12.9" r="4.0" fill="#ffff00"/><path d="M11.8 12.9 L7.800000000000001 12.9 A4.0 4.0 0 0 1 11.8 8.9 Z" fill="#000"/><path d="M11.8 12.9 L15.8 12.9 A4.0 4.0 0 0 1 11.8 16.9 Z" fill="#000"/>
<path d="M6.4 10.5 L9.4 8 L9.6 10.6 Z" fill="#d2452c"/>
</g>
<g transform="translate(422,249.3) scale(1.0)" fill="#dc5c3a" stroke="#dc5c3a"><ellipse cx="7" cy="9.8" rx="3.8" ry="5.0" stroke="none"/><path d="M5.3 5.2 L5.2 0.6 L6.4 2.2 L7.6 2.2 L8.8 0.6 L8.7 5.2 Z" stroke="none"/><path d="M4 6.2 L2.4 5 L2.2 2.6 M10 6.2 L11.6 5 L11.8 2.6 M3.6 8.6 L1.2 8.6 L0.6 11.6 M10.4 8.6 L12.8 8.6 L13.4 11.6 M4.2 12.4 L2.2 13.2 L1.8 15 M9.8 12.4 L11.8 13.2 L12.2 15" fill="none" stroke-width="1.25"/></g>
<circle cx="538.2" cy="213" r="15" fill="#ffff00"/><path d="M538.2 213 L523.2 213 A15 15 0 0 1 538.2 198 Z" fill="#000"/><path d="M538.2 213 L553.2 213 A15 15 0 0 1 538.2 228 Z" fill="#000"/>
<path d="M614.8 207.6 V222 A6.15 6.15 0 0 1 602.5 222 V204.6 A4.35 4.35 0 0 1 611.2 204.6 V219.7 A2.6 2.6 0 0 1 606 219.7 V207.6" fill="none" stroke="#7a7a7a" stroke-width="1.7"/>
<path d="M606 254 L612 254 L609 257.5 Z" fill="#111"/>
<circle cx="674" cy="213.8" r="15" fill="#4a7ebb"/><circle cx="674" cy="206.6" r="2.9" fill="#fff"/><rect x="671.7" y="211.6" width="4.6" height="11.2" fill="#fff"/>
<rect x="718" y="209" width="11" height="11" fill="#4a7ebb"/><g fill="#76a895"><rect x="736" y="200.2" width="9" height="8.6"/><rect x="736" y="210.2" width="9" height="8.6"/><rect x="736" y="220.2" width="9" height="8.6"/></g><path d="M729 214.5 H736 M732.5 204.5 V224.5 M732.5 204.5 H736 M732.5 224.5 H736" stroke="#a0a0a0" stroke-width="1" fill="none"/>
<path d="M780.1 213.9 A9.9 9.9 0 1 0 783.6 206.3" fill="none" stroke="#4a7ebb" stroke-width="4"/><path d="M777 204 L777 214 L786.6 214 Z" fill="#4a7ebb"/><path d="M790 208 V214.9 H794.8" fill="none" stroke="#4a7ebb" stroke-width="1.9"/>
<path d="M818.9 213.6 L818.9 200.1 A13.5 13.5 0 0 1 827.4 203.1 Z" fill="#72a58f"/><path d="M818.9 213.6 L828.3 204 A13.5 13.5 0 0 1 826.3 224.9 Z" fill="#4a7ebb"/><path d="M818.9 213.6 L825.3 225.5 A13.5 13.5 0 0 1 818.9 227.1 Z" fill="#eec27a"/><path d="M818.9 213.6 L818.9 200.1 M818.9 213.6 L828 203.8 M818.9 213.6 L825.8 225.3" stroke="#c8c8c8" stroke-width="1"/><path d="M826 200.4 H840.4 M833 214.5 H840.4 M826 227.3 H840.4" stroke="#6e6e6e" stroke-width="1.1"/><g fill="none" stroke="#6e6e6e" stroke-width="1.2"><rect x="840.6" y="199.6" width="8.8" height="7.7"/><rect x="840.6" y="210.6" width="8.8" height="7.7"/><rect x="840.6" y="221.6" width="8.8" height="7.7"/></g>
<path d="M330.0 355.0 L333.5 358.6 L337.0 355.0" fill="none" stroke="#6f6f6f" stroke-width="1.8"/>
<path d="M330.0 378.0 L333.5 381.6 L337.0 378.0" fill="none" stroke="#6f6f6f" stroke-width="1.8"/>
<path d="M156.0 401.0 L159.5 404.6 L163.0 401.0" fill="none" stroke="#6f6f6f" stroke-width="1.8"/>
<path d="M330.0 427.0 L333.5 430.6 L337.0 427.0" fill="none" stroke="#c0c0c0" stroke-width="1.8"/>
<path d="M27 471 L23.5 474.5 L27 478" fill="none" stroke="#7a7a7a" stroke-width="1.6"/>
<path d="M539.5 471 L543 474.5 L539.5 478" fill="none" stroke="#6a6a6a" stroke-width="1.6"/>
<path d="M39 677 L43.5 681 L39 685 Z" fill="#5a5a5a"/>
<path d="M968.5 293.5 L976 301 M976 293.5 L968.5 301" stroke="#6a6a6a" stroke-width="1.5"/>
<path d="M570 337.5 L574.5 341 L570 344.5 Z" fill="#5a5a5a"/>
<g transform="translate(601,331)"><rect x="1.5" y="1.5" width="11" height="13" fill="#ffffff"/><path d="M5.5 14.5 H1.5 V1.5 H12.5 V6.6" fill="none" stroke="#707070" stroke-width="1"/><path d="M5.6 3.4 C4.4 3.6 4.6 4.8 4.6 6 C4.6 6.9 4.3 7.3 3.5 7.4 C4.3 7.5 4.6 7.9 4.6 8.8 C4.6 10 4.4 11.2 5.6 11.4" fill="none" stroke="#4a7ebb" stroke-width="0.95"/><path d="M8.2 3.4 C9.4 3.6 9.2 4.8 9.2 6 C9.2 6.9 9.5 7.3 10.3 7.4" fill="none" stroke="#4a7ebb" stroke-width="0.95"/><path d="M7.3 15.3 L7.66 12.12 L12.39 7.39 L15.21 10.21 L10.48 14.94 Z" fill="#3f77bd"/><path d="M7.66 12.12 L10.48 14.94 M11.33 8.45 L14.15 11.27" stroke="#ffffff" stroke-width="0.55"/></g>
<g transform="translate(601,350)"><rect x="1.5" y="1.5" width="11" height="13" fill="#ffffff"/><path d="M5.5 14.5 H1.5 V1.5 H12.5 V6.6" fill="none" stroke="#707070" stroke-width="1"/><path d="M5.6 3.4 C4.4 3.6 4.6 4.8 4.6 6 C4.6 6.9 4.3 7.3 3.5 7.4 C4.3 7.5 4.6 7.9 4.6 8.8 C4.6 10 4.4 11.2 5.6 11.4" fill="none" stroke="#4a7ebb" stroke-width="0.95"/><path d="M8.2 3.4 C9.4 3.6 9.2 4.8 9.2 6 C9.2 6.9 9.5 7.3 10.3 7.4" fill="none" stroke="#4a7ebb" stroke-width="0.95"/><path d="M7.3 15.3 L7.66 12.12 L12.39 7.39 L15.21 10.21 L10.48 14.94 Z" fill="#3f77bd"/><path d="M7.66 12.12 L10.48 14.94 M11.33 8.45 L14.15 11.27" stroke="#ffffff" stroke-width="0.55"/></g>
<g transform="translate(601,369)"><rect x="1.5" y="1.5" width="11" height="13" fill="#ffffff"/><path d="M5.5 14.5 H1.5 V1.5 H12.5 V6.6" fill="none" stroke="#707070" stroke-width="1"/><path d="M5.6 3.4 C4.4 3.6 4.6 4.8 4.6 6 C4.6 6.9 4.3 7.3 3.5 7.4 C4.3 7.5 4.6 7.9 4.6 8.8 C4.6 10 4.4 11.2 5.6 11.4" fill="none" stroke="#4a7ebb" stroke-width="0.95"/><path d="M8.2 3.4 C9.4 3.6 9.2 4.8 9.2 6 C9.2 6.9 9.5 7.3 10.3 7.4" fill="none" stroke="#4a7ebb" stroke-width="0.95"/><path d="M7.3 15.3 L7.66 12.12 L12.39 7.39 L15.21 10.21 L10.48 14.94 Z" fill="#3f77bd"/><path d="M7.66 12.12 L10.48 14.94 M11.33 8.45 L14.15 11.27" stroke="#ffffff" stroke-width="0.55"/></g>
</svg>
<div style="position:absolute;left:143px;top:275px;width:49px;height:1px;background:#ffffff;opacity:0.85"></div>
<svg class="ov" style="mix-blend-mode:multiply" width="1044" height="736"><path d="M814 233 L857 232 L858 249.5 L814 250 Z" fill="#ffff00"/></svg>
<svg class="ov" style="mix-blend-mode:multiply" width="1044" height="736"><path d="M34 510 L150 509 L202 508.5 L202.5 525 L140 525.5 L34 528 Z" fill="#ffff00"/></svg>
</body></html>
